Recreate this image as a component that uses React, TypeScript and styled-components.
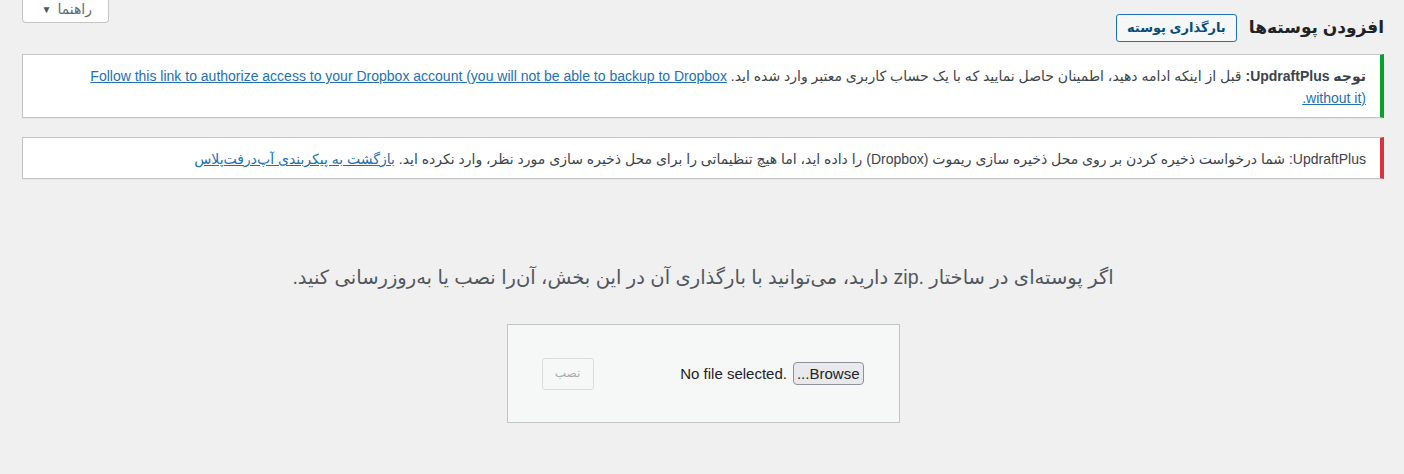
import React from 'react'
import styled, { createGlobalStyle } from 'styled-components'

const GlobalStyle = createGlobalStyle`
  html, body {
    margin: 0;
    padding: 0;
    background: #f0f0f1;
  }
  body {
    direction: rtl;
    color: #3c434a;
    font-family: Tahoma, "Liberation Sans", "DejaVu Sans", sans-serif;
    font-size: 14px;
    line-height: 1.4em;
  }
`

const Wrap = styled.div`
  padding: 0 20px 0 22px;
  min-height: 474px;
  box-sizing: border-box;
`

const TopRow = styled.div`
  display: flex;
  justify-content: space-between;
  align-items: flex-start;
  height: 54px;
`

const TitleGroup = styled.div`
  display: flex;
  align-items: center;
  gap: 12px;
  padding-top: 14px;
`

const Title = styled.h1`
  margin: 0;
  font-size: 17px;
  font-weight: 700;
  line-height: 28px;
  color: #1d2327;
`

const OutlineButton = styled.a`
  display: inline-flex;
  align-items: center;
  height: 26px;
  padding: 0 10px;
  border: 1px solid #2271b1;
  border-radius: 3px;
  background: #f6f7f7;
  color: #0a4b78;
  font-size: 13px;
  font-weight: 700;
  text-decoration: none;
`

const HelpTab = styled.button`
  display: inline-flex;
  align-items: center;
  gap: 6px;
  height: 23px;
  width: 87px;
  box-sizing: border-box;
  padding: 0 16px 2px;
  border: 1px solid #c3c4c7;
  border-top: none;
  border-radius: 0 0 4px 4px;
  background: #fff;
  color: #646970;
  font: inherit;
  font-size: 14px;
`

const Caret = styled.span`
  font-size: 10px;
  color: #50575e;
`

const Notice = styled.div<{ tone: string }>`
  background: #fff;
  border: 1px solid #c3c4c7;
  border-right: 4px solid ${({ tone }) => tone};
  box-shadow: 0 1px 1px rgba(0, 0, 0, 0.04);
  padding: 10px 14px 8px 28px;
  margin-bottom: 19px;
  line-height: 22px;
`

const NoticeText = styled.p`
  margin: 0;
`

const Link = styled.a`
  color: #2271b1;
  text-decoration: underline;
`

const UploadArea = styled.div`
  display: flex;
  flex-direction: column;
  align-items: center;
  padding-top: 65px;
`

const InstallHelp = styled.p`
  margin: 0;
  font-size: 19.5px;
  line-height: 28px;
  color: #50575e;
`

const UploadForm = styled.form`
  margin-top: 33px;
  width: 393px;
  height: 99px;
  box-sizing: border-box;
  padding: 0 35px 0 34px;
  display: flex;
  align-items: center;
  justify-content: space-between;
  background: #f6f7f7;
  border: 1px solid #c3c4c7;
`

const FilePicker = styled.div`
  display: flex;
  align-items: center;
  gap: 6px;
  font-size: 15px;
  color: #1d2327;
  font-family: "Liberation Sans", Arial, sans-serif;
`

const BrowseButton = styled.span`
  display: inline-flex;
  align-items: center;
  height: 21px;
  padding: 0 3px;
  border: 1px solid #8f8f9d;
  border-radius: 4px;
  background: #e9e9ed;
  color: #1d2327;
  font-size: 15px;
`

const FileLabel = styled.span`
  direction: ltr;
  unicode-bidi: isolate;
`

const InstallButton = styled.button`
  height: 32px;
  width: 52px;
  border: 1px solid #dcdcde;
  border-radius: 3px;
  background: #f6f7f7;
  color: #a7aaad;
  font: inherit;
  font-size: 12px;
`

export default function App() {
  return (
    <>
      <GlobalStyle />
      <Wrap>
        <TopRow>
          <TitleGroup>
            <Title>افزودن پوسته‌ها</Title>
            <OutlineButton href="#">بارگذاری پوسته</OutlineButton>
          </TitleGroup>
          <HelpTab>
            راهنما <Caret>▼</Caret>
          </HelpTab>
        </TopRow>

        <Notice tone="#00a32a">
          <NoticeText>
            <strong>توجه UpdraftPlus:</strong> قبل از اینکه ادامه دهید، اطمینان حاصل نمایید که با یک حساب کاربری معتبر وارد شده اید.{' '}
            <Link href="#">
              {'Follow this link to authorize access to your Dropbox account (you will not be able to backup to Dropbox without it)\u200E.'}
            </Link>
          </NoticeText>
        </Notice>

        <Notice tone="#d63638">
          <NoticeText>
            UpdraftPlus: شما درخواست ذخیره کردن بر روی محل ذخیره سازی ریموت (Dropbox) را داده اید، اما هیچ تنظیماتی را برای محل ذخیره سازی مورد نظر، وارد نکرده اید.{' '}
            <Link href="#">بازگشت به پیکربندی آپ‌درفت‌پلاس</Link>
          </NoticeText>
        </Notice>

        <UploadArea>
          <InstallHelp>اگر پوسته‌ای در ساختار .zip دارید، می‌توانید با بارگذاری آن در این بخش، آن‌را نصب یا به‌روزرسانی کنید.</InstallHelp>
          <UploadForm onSubmit={(e) => e.preventDefault()}>
            <FilePicker>
              <BrowseButton>Browse...</BrowseButton>
              <FileLabel>No file selected.</FileLabel>
            </FilePicker>
            <InstallButton disabled>نصب</InstallButton>
          </UploadForm>
        </UploadArea>
      </Wrap>
    </>
  )
}
